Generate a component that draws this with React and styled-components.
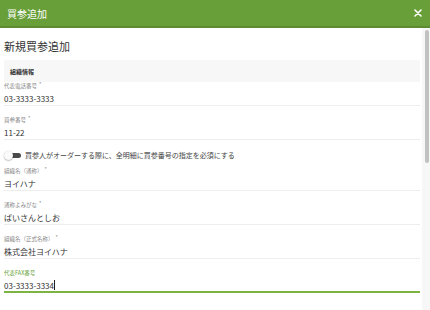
import React from "react";
import styled, { createGlobalStyle } from "styled-components";

const Global = createGlobalStyle`
  html, body { margin: 0; padding: 0; background: #fff; }
  body { font-family: "Noto Sans CJK JP", "Noto Sans", sans-serif; }
`;

const Dialog = styled.div`
  width: 430px;
  height: 310px;
  display: flex;
  flex-direction: column;
  overflow: hidden;
`;

const Header = styled.div`
  height: 26px;
  flex: none;
  background: #689f38;
  border-bottom: 2px solid #5b8d30;
  display: flex;
  align-items: center;
  justify-content: space-between;
  padding: 0 8px 0 7px;
  color: #fff;
  font-size: 10px;
`;

const CloseBtn = styled.button`
  border: 0;
  background: none;
  padding: 0;
  display: flex;
  cursor: pointer;
`;

const Body = styled.div`
  flex: 1;
  display: flex;
`;

const Content = styled.div`
  flex: 1;
  padding: 9px 2px 0 4px;
`;

const Scrollbar = styled.div`
  width: 8px;
  background: #f7f7f7;
  padding: 2px 1px 0 3px;
  box-sizing: border-box;
`;

const Thumb = styled.div`
  height: 133px;
  background: #c1c1c1;
  border-radius: 2px;
`;

const Title = styled.h2`
  margin: 0 0 5px;
  font-size: 11px;
  line-height: 18px;
  font-weight: 400;
  color: #333;
`;

const Section = styled.div`
  height: 22px;
  background: #f7f7f7;
  display: flex;
  align-items: center;
  padding-left: 6px;
  font-size: 6px;
  font-weight: 700;
  color: #333;
`;

const Field = styled.div`
  margin-top: ${(p) => p.$mt ?? 10}px;
`;

const Label = styled.div`
  height: 8px;
  font-size: 5.5px;
  line-height: 8px;
  color: ${(p) => (p.$active ? "#689f38" : "#888")};
  margin-bottom: 2px;
  sup {
    font-size: 5px;
    line-height: 0;
    margin-left: 2px;
    vertical-align: 2px;
  }
`;

const Value = styled.div`
  font-size: 8px;
  line-height: 13px;
  height: ${(p) => (p.$active ? 12 : 13)}px;
  color: #333;
  border-bottom: ${(p) => (p.$active ? "2px solid #7cb342" : "1px solid #eee")};
  display: flex;
  align-items: center;
`;

const Caret = styled.span`
  display: inline-block;
  width: 1px;
  height: 10px;
  background: #222;
  margin-left: 0.5px;
`;

const ToggleRow = styled.label`
  margin-top: 8px;
  height: 14px;
  display: flex;
  align-items: center;
  gap: 3px;
  font-size: 7px;
  color: #444;
`;

const Switch = styled.span`
  position: relative;
  width: 18px;
  height: 9px;
  flex: none;
  &::before {
    content: "";
    position: absolute;
    left: 6px;
    right: 1px;
    top: 2px;
    height: 5px;
    border-radius: 3px;
    background: #4a4a4a;
  }
  &::after {
    content: "";
    position: absolute;
    left: 0;
    top: 0;
    width: 9px;
    height: 9px;
    border-radius: 50%;
    background: #fafafa;
    box-shadow: 0 0.5px 1.5px rgba(0, 0, 0, 0.4);
  }
`;

const fields = [
  { label: "組織名（通称）", value: "ヨイハナ", required: true, mt: 5 },
  { label: "通称よみがな", value: "ばいさんとしお", required: true },
  { label: "組織名（正式名称）", value: "株式会社ヨイハナ", required: true },
];

const App = () => {
  return (
    <Dialog>
      <Global />
      <Header>
        <span>買参追加</span>
        <CloseBtn aria-label="close">
          <svg width="8" height="8" viewBox="0 0 8 8">
            <path d="M1 1L7 7M7 1L1 7" stroke="#fff" strokeWidth="1.6" strokeLinecap="round" />
          </svg>
        </CloseBtn>
      </Header>
      <Body>
        <Content>
          <Title>新規買参追加</Title>
          <Section>組織情報</Section>
          <Field $mt={0}>
            <Label>代表電話番号<sup>*</sup></Label>
            <Value>03-3333-3333</Value>
          </Field>
          <Field>
            <Label>買参番号<sup>*</sup></Label>
            <Value>11-22</Value>
          </Field>
          <ToggleRow>
            <Switch />
            買参人がオーダーする際に、全明細に買参番号の指定を必須にする
          </ToggleRow>
          {fields.map((f) => (
            <Field key={f.label} $mt={f.mt}>
              <Label>
                {f.label}
                {f.required && <sup>*</sup>}
              </Label>
              <Value>{f.value}</Value>
            </Field>
          ))}
          <Field>
            <Label $active>代表FAX番号</Label>
            <Value $active>
              03-3333-3334<Caret />
            </Value>
          </Field>
        </Content>
        <Scrollbar>
          <Thumb />
        </Scrollbar>
      </Body>
    </Dialog>
  );
};

export default App;
